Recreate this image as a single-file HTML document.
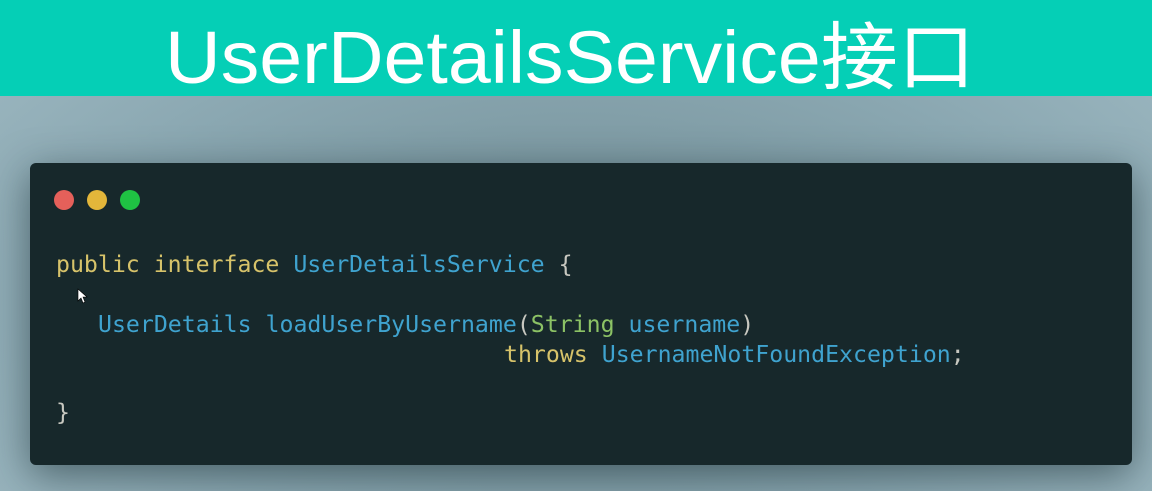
<!DOCTYPE html>
<html><head><meta charset="utf-8"><style>
html,body{margin:0;padding:0;width:1152px;height:491px;overflow:hidden}
body{background:radial-gradient(ellipse at 50% 60%,#6f8b93 0%,#8aa7b1 60%,#9fbac3 100%);position:relative}
.hdr{position:absolute;left:0;top:0;width:1152px;height:96px;background:#05cfb6}
.card{position:absolute;left:30px;top:163px;width:1102px;height:302px;background:#17282b;border-radius:6px;box-shadow:0 10px 40px rgba(20,40,45,.55)}
svg{position:absolute;left:0;top:0}
text{white-space:pre}
</style></head><body>
<div class="hdr"></div>
<div class="card"></div>
<svg width="1152" height="491">
<text x="165" y="83" textLength="810" lengthAdjust="spacingAndGlyphs" font-family="Liberation Sans, Noto Sans CJK SC, sans-serif" font-size="74" fill="#fff">UserDetailsService接口</text>
<circle cx="64" cy="200" r="10" fill="#e5605a"/>
<circle cx="97" cy="200" r="10" fill="#e3b63a"/>
<circle cx="130" cy="200" r="10" fill="#1fc243"/>
<g font-family="DejaVu Sans Mono, Liberation Mono, monospace" font-size="23.2">
<text x="56" y="272"><tspan fill="#d7c36a">public interface </tspan><tspan fill="#3fa3cf">UserDetailsService </tspan><tspan fill="#c8c8c0">{</tspan></text>
<text x="98" y="332"><tspan fill="#3fa3cf">UserDetails loadUserByUsername</tspan><tspan fill="#c8c8c0">(</tspan><tspan fill="#8cc265">String </tspan><tspan fill="#3fa3cf">username</tspan><tspan fill="#c8c8c0">)</tspan></text>
<text x="504" y="362"><tspan fill="#d7c36a">throws </tspan><tspan fill="#3fa3cf">UsernameNotFoundException</tspan><tspan fill="#c8c8c0">;</tspan></text>
<text x="56" y="420" fill="#c8c8c0">}</text>
</g>
<path d="M78 289 l0 12 l3 -3 l2 5 l2 -1 l-2 -5 l4 0 z" fill="#fff" stroke="#000" stroke-width=".6"/>
</svg>
</body></html>
